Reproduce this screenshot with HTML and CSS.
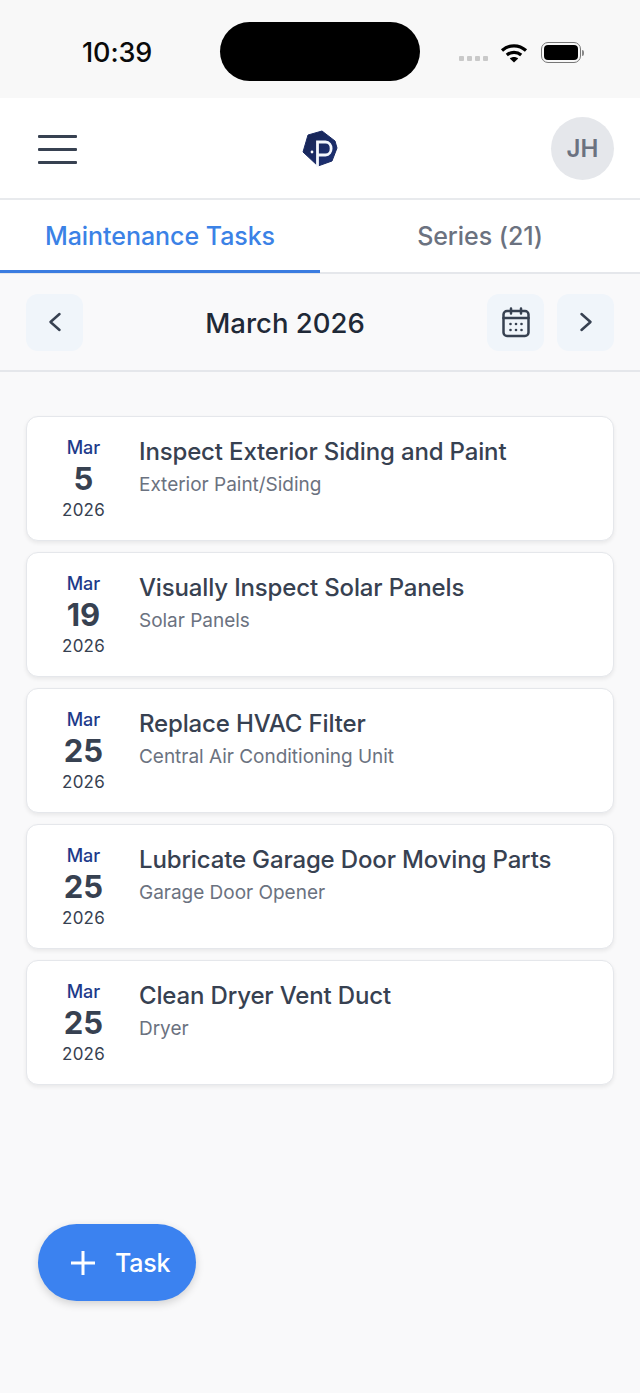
FILE: index.html

```html
<!doctype html>
<html lang="en">
<head>
    <meta charset="UTF-8">
    <meta name="viewport" content="width=device-width, initial-scale=1">
    <title>Maintenance Tasks</title>
    <link rel="stylesheet" href="styles.css">
</head>
<body>
<div class="status-bar">
    <span class="clock">10:39</span>
    <div class="island"></div>
    <div class="status-icons">
        <div class="signal"><i></i><i></i><i></i><i></i></div>
        <svg class="wifi" width="28" height="20" viewBox="0 0 28 20">
            <path d="M2 7.5C9 1.2 19 1.2 26 7.5" fill="none" stroke="#000" stroke-width="3.2"/>
            <path d="M6.8 12C11 8.4 17 8.4 21.2 12" fill="none" stroke="#000" stroke-width="3.2"/>
            <path d="M14 19.5L9.8 15.4C12 13.4 16 13.4 18.2 15.4Z" fill="#000"/>
        </svg>
        <div class="battery"><div class="battery-fill"></div></div>
        <div class="battery-cap"></div>
    </div>
</div>

<header class="app-header">
    <button class="menu-btn" aria-label="Menu"><i></i><i></i><i></i></button>
    <svg class="logo" width="40" height="40" viewBox="0 0 40 40">
        <defs>
            <linearGradient id="logoFill" x1="0" y1="0" x2="1" y2="1">
                <stop offset="0" stop-color="#16234f"/>
                <stop offset="1" stop-color="#1e3278"/>
            </linearGradient>
        </defs>
        <path d="M8 6L22 2L35 12L37 19L32 32L18 37L3 23Z" fill="url(#logoFill)" stroke="#1a2a63" stroke-width="1" stroke-linejoin="round"/>
        <path d="M17.500 38V13H25.500C33 13 33 26 25.500 26H17.500" fill="none" stroke="#f4f7fd" stroke-width="2.800"/>
        <circle cx="12" cy="23" r="1.400" fill="#fff"/>
    </svg>
    <div class="avatar">JH</div>
</header>

<nav class="tabs">
    <div class="tab active">Maintenance Tasks</div>
    <div class="tab">Series (21)</div>
</nav>

<section class="month-bar">
    <button class="nav-btn" aria-label="Previous">
        <svg width="24" height="24" viewBox="0 0 24 24"><path d="M16.500 4L7.500 12L16.500 20" class="ico"/></svg>
    </button>
    <h2 class="month-title">March 2026</h2>
    <button class="nav-btn" aria-label="Calendar">
        <svg width="30" height="32" viewBox="0 0 30 32">
            <rect x="2.500" y="5" width="25" height="25" rx="3.500" class="ico"/>
            <path d="M2.500 12H27.500M10 2.500V7.500M20 2.500V7.500" class="ico"/>
            <g fill="#374151">
                <circle cx="9.500" cy="18" r="1.300"/><circle cx="15" cy="18" r="1.300"/><circle cx="20.500" cy="18" r="1.300"/>
                <circle cx="9.500" cy="24" r="1.300"/><circle cx="15" cy="24" r="1.300"/><circle cx="20.500" cy="24" r="1.300"/>
            </g>
        </svg>
    </button>
    <button class="nav-btn" aria-label="Next">
        <svg width="24" height="24" viewBox="0 0 24 24"><path d="M7.500 4L16.500 12L7.500 20" class="ico"/></svg>
    </button>
</section>

<main class="task-list">
    <article class="task-card">
        <div class="task-date"><span class="date-month">Mar</span><span class="date-day">5</span><span class="date-year">2026</span></div>
        <div class="task-info"><div class="task-title">Inspect Exterior Siding and Paint</div><div class="task-sub">Exterior Paint/Siding</div></div>
    </article>
    <article class="task-card">
        <div class="task-date"><span class="date-month">Mar</span><span class="date-day">19</span><span class="date-year">2026</span></div>
        <div class="task-info"><div class="task-title">Visually Inspect Solar Panels</div><div class="task-sub">Solar Panels</div></div>
    </article>
    <article class="task-card">
        <div class="task-date"><span class="date-month">Mar</span><span class="date-day">25</span><span class="date-year">2026</span></div>
        <div class="task-info"><div class="task-title">Replace HVAC Filter</div><div class="task-sub">Central Air Conditioning Unit</div></div>
    </article>
    <article class="task-card">
        <div class="task-date"><span class="date-month">Mar</span><span class="date-day">25</span><span class="date-year">2026</span></div>
        <div class="task-info"><div class="task-title">Lubricate Garage Door Moving Parts</div><div class="task-sub">Garage Door Opener</div></div>
    </article>
    <article class="task-card">
        <div class="task-date"><span class="date-month">Mar</span><span class="date-day">25</span><span class="date-year">2026</span></div>
        <div class="task-info"><div class="task-title">Clean Dryer Vent Duct</div><div class="task-sub">Dryer</div></div>
    </article>
</main>

<button class="fab">
    <svg width="28" height="28" viewBox="0 0 28 28"><path d="M14 2V26M2 14H26" fill="none" stroke="#fff" stroke-width="3"/></svg>
    <span>Task</span>
</button>
</body>
</html>
```

FILE: styles.css

```css
* {
    box-sizing: border-box;
}

html, body {
    margin: 0;
    padding: 0;
}

body {
    position: relative;
    width: 640px;
    height: 1393px;
    overflow: hidden;
    background: #f9f9fa;
    font-family: Inter, "Liberation Sans", sans-serif;
    color: #374151;
}

button {
    border: 0;
    padding: 0;
    font-family: inherit;
}

.ico {
    fill: none;
    stroke: #374151;
    stroke-width: 2.5;
    stroke-linecap: round;
    stroke-linejoin: round;
}

/* status bar */
.status-bar {
    height: 98px;
    background: #f8f8f8;
    display: flex;
    align-items: flex-start;
    padding: 22px 0 0 82px;
}

.clock {
    width: 138px;
    margin-top: 16px;
    font-size: 27px;
    line-height: 30px;
    font-weight: 500;
    color: #0a0a0a;
    letter-spacing: -0.1px;
}

.island {
    width: 200px;
    height: 59px;
    border-radius: 30px;
    background: #000;
}

.status-icons {
    display: flex;
    align-items: center;
    margin: 20px 0 0 39px;
}

.signal {
    display: flex;
    gap: 3px;
    margin: 12px 12px 0 0;
}

.signal i {
    width: 5px;
    height: 5px;
    border-radius: 1px;
    background: #c9c9c9;
}

.battery {
    width: 40px;
    height: 21px;
    margin-left: 13px;
    padding: 2px;
    border: 1.500px solid #777;
    border-radius: 7px;
}

.battery-fill {
    height: 100%;
    background: #000;
    border-radius: 4px;
}

.battery-cap {
    width: 2px;
    height: 6px;
    margin-left: 1px;
    background: #888;
    border-radius: 0 2px 2px 0;
}

/* top header */
.app-header {
    height: 102px;
    background: #fff;
    border-bottom: 2px solid #e8eaed;
    display: flex;
    align-items: center;
    justify-content: space-between;
    padding: 0 26px 0 38px;
}

.menu-btn {
    width: 39px;
    margin-top: 2px;
    background: none;
    display: flex;
    flex-direction: column;
    gap: 10px;
}

.menu-btn i {
    height: 3px;
    background: #374151;
    border-radius: 1px;
}

.logo {
    margin: 2px 0 0 12px;
}

.avatar {
    width: 63px;
    height: 63px;
    border-radius: 50%;
    background: #e5e7eb;
    color: #6b7280;
    font-size: 24px;
    font-weight: 600;
    display: flex;
    align-items: center;
    justify-content: center;
}

/* tabs */
.tabs {
    height: 74px;
    background: #fff;
    border-bottom: 2px solid #e5e7eb;
    display: flex;
}

.tab {
    width: 320px;
    height: 73px;
    padding-top: 21px;
    text-align: center;
    font-size: 25px;
    line-height: 30px;
    font-weight: 500;
    letter-spacing: -0.05px;
    color: #6b7280;
}

.tab.active {
    color: #3b82e6;
    border-bottom: 3px solid #3b7ce0;
}

/* month bar */
.month-bar {
    height: 98px;
    border-bottom: 2px solid #e5e7eb;
    display: flex;
    align-items: center;
    gap: 13px;
    padding: 0 26px;
}

.nav-btn {
    width: 57px;
    height: 57px;
    border-radius: 12px;
    background: #f0f5fa;
    display: flex;
    align-items: center;
    justify-content: center;
}

.month-title {
    flex: 1;
    margin: 0;
    text-align: center;
    font-size: 27.500px;
    line-height: 34px;
    font-weight: 500;
    color: #1f2937;
    padding-top: 1px;
}

/* task cards */
.task-list {
    display: flex;
    flex-direction: column;
    gap: 11px;
    padding: 44px 26px 0;
}

.task-card {
    height: 125px;
    background: #fff;
    border: 1px solid #e5e7eb;
    border-radius: 12px;
    box-shadow: 0 2px 4px rgba(0, 0, 0, 0.07);
    display: flex;
    padding-top: 19px;
}

.task-date {
    width: 112px;
    padding: 1px 0 0 1px;
    display: flex;
    flex-direction: column;
    align-items: center;
}

.date-month {
    font-size: 18px;
    line-height: 22px;
    font-weight: 500;
    color: #1e3a8a;
}

.date-day {
    margin: 0;
    font-size: 31px;
    line-height: 40px;
    font-weight: 700;
    color: #374151;
}

.date-year {
    font-size: 17px;
    line-height: 22px;
    letter-spacing: 0.2px;
    color: #374151;
}

.task-title {
    font-size: 24px;
    line-height: 32px;
    font-weight: 500;
    letter-spacing: -0.15px;
    color: #374151;
}

.task-sub {
    margin-top: 2px;
    font-size: 19px;
    line-height: 30px;
    letter-spacing: -0.02px;
    color: #6b7280;
}

/* add button */
.fab {
    position: absolute;
    left: 38px;
    top: 1224px;
    width: 158px;
    height: 77px;
    border-radius: 39px;
    background: #3b82f0;
    color: #fff;
    box-shadow: 0 3px 8px rgba(0, 0, 0, 0.16);
    display: flex;
    align-items: center;
    gap: 18px;
    padding-left: 31px;
    font-size: 25px;
    font-weight: 500;
    letter-spacing: -0.2px;
}
```
